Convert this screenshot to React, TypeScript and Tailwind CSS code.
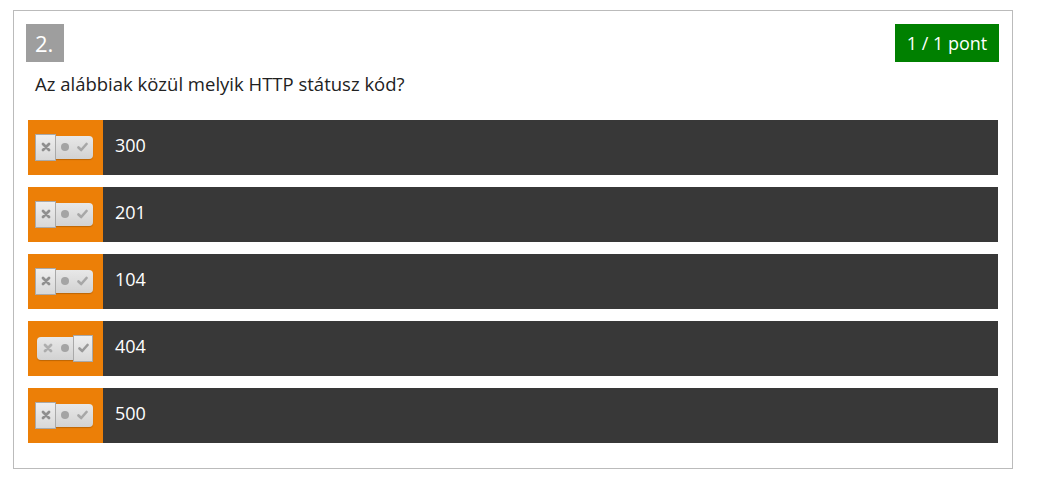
const answers = [
  { label: "300", pick: 0 },
  { label: "201", pick: 0 },
  { label: "104", pick: 0 },
  { label: "404", pick: 2 },
  { label: "500", pick: 0 },
];

function Cross() {
  return (
    <svg width="10" height="10" viewBox="0 0 10 10">
      <path d="M2 2 L8 8 M8 2 L2 8" stroke="#8f8f8f" strokeWidth="2.8" strokeLinecap="round" />
    </svg>
  );
}

function Dot() {
  return (
    <svg width="10" height="10" viewBox="0 0 10 10">
      <circle cx="5" cy="5" r="4" fill="#a4a4a4" />
    </svg>
  );
}

function Check() {
  return (
    <svg width="11" height="10" viewBox="0 0 11 10">
      <path d="M1.5 5.5 L4.2 8 L9.5 2" stroke="#9a9a9a" strokeWidth="2.6" fill="none" strokeLinecap="round" strokeLinejoin="round" />
    </svg>
  );
}

function Toggle({ pick }: { pick: number }) {
  return (
    <div className="relative w-[58px] h-[27px]">
      {/* pill */}
      <div className="absolute left-[2px] right-0 top-[2px] bottom-[2px] rounded-[4px] bg-gradient-to-b from-[#e8e8e8] to-[#d2d2d2] shadow-[0_1px_1px_rgba(0,0,0,0.2)] flex items-center justify-between pl-[6px] pr-[5px]">
        <span className="opacity-60 flex"><Cross /></span>
        <span className="flex"><Dot /></span>
        <span className="opacity-80 flex"><Check /></span>
      </div>
      {/* selected knob */}
      {pick === 0 && (
        <div className="absolute left-0 top-0 w-[21px] h-[27px] border border-[#a9a9a9] bg-gradient-to-b from-[#eeeeee] to-[#d8d8d8] flex items-center justify-center">
          <Cross />
        </div>
      )}
      {pick === 2 && (
        <div className="absolute right-0 top-0 w-[20px] h-[27px] border border-[#a9a9a9] bg-gradient-to-b from-[#eeeeee] to-[#d8d8d8] flex items-center justify-center">
          <Check />
        </div>
      )}
    </div>
  );
}

export default function App() {
  return (
    <div className="bg-white min-h-[484px] pt-[10px] pl-[13px] font-['Open_Sans',sans-serif]">
      <div className="w-[1000px] border border-[#bbbbbb] px-[14px] pt-[13px] pb-[25px]">
        <div className="flex justify-between items-start -ml-[2px] -mr-[1px]">
          <div className="w-[38px] h-[38px] bg-[#9e9e9e] text-white text-[22px] leading-[38px] pl-[9px]">2.</div>
          <div className="h-[38px] w-[104px] text-center bg-[#008000] text-white text-[18px] leading-[38px]">1 / 1 pont</div>
        </div>
        <div className="mt-[10px] pl-[7px] text-[18.5px] leading-[24px] text-[#222]">
          Az alábbiak közül melyik HTTP státusz kód?
        </div>
        <div className="mt-[24px] flex flex-col gap-[12px]">
          {answers.map((a) => (
            <div key={a.label} className="flex h-[55px] bg-[#383838]">
              <div className="w-[75px] bg-[#ec7f07] flex items-center pl-[7px] pb-[1px]">
                <Toggle pick={a.pick} />
              </div>
              <div className="pl-[12px] pb-[5px] flex items-center text-white text-[18px]">{a.label}</div>
            </div>
          ))}
        </div>
      </div>
    </div>
  );
}
